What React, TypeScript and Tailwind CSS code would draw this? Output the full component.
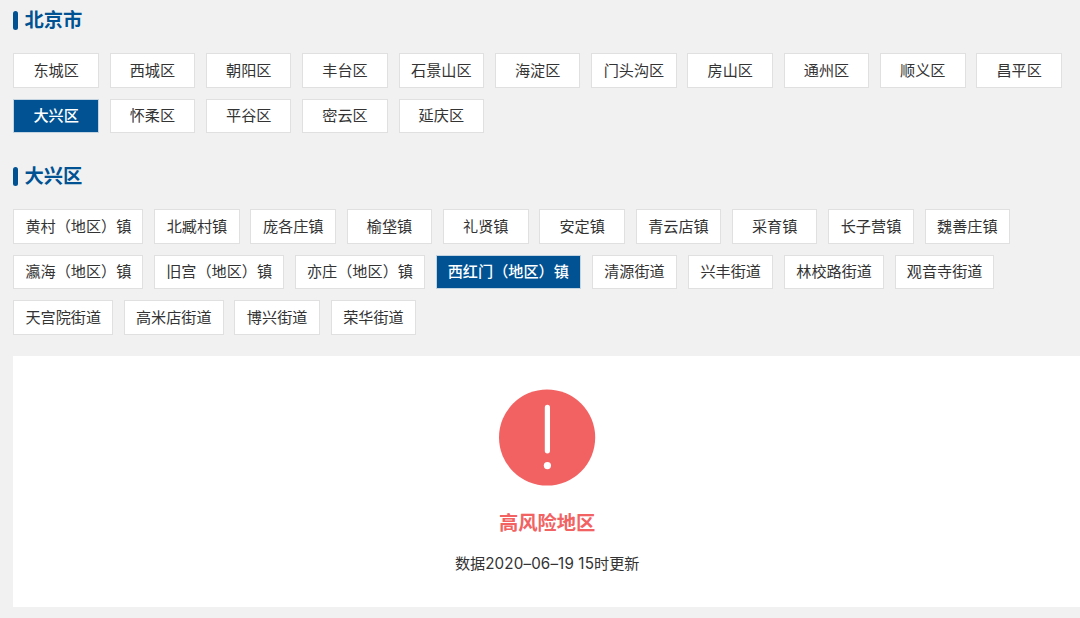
import { useState } from "react";
import clsx from "clsx";

const districts = [
  "东城区", "西城区", "朝阳区", "丰台区", "石景山区", "海淀区", "门头沟区", "房山区",
  "通州区", "顺义区", "昌平区", "大兴区", "怀柔区", "平谷区", "密云区", "延庆区",
];

const streets = [
  "黄村（地区）镇", "北臧村镇", "庞各庄镇", "榆垡镇", "礼贤镇", "安定镇", "青云店镇",
  "采育镇", "长子营镇", "魏善庄镇", "瀛海（地区）镇", "旧宫（地区）镇", "亦庄（地区）镇",
  "西红门（地区）镇", "清源街道", "兴丰街道", "林校路街道", "观音寺街道", "天宫院街道",
  "高米店街道", "博兴街道", "荣华街道",
];

function Title({ children }: { children: string }) {
  return (
    <h2 className="flex h-5 items-center gap-[6.5px] text-[19.3px] font-bold text-[#005293]">
      <span className="h-[19.5px] w-[4.5px] rounded-full bg-[#005293]" />
      <span className="pb-0.5">{children}</span>
    </h2>
  );
}

type AreaListProps = {
  items: string[];
  active: string;
  onSelect: (item: string) => void;
};

function AreaList({ items, active, onSelect }: AreaListProps) {
  return (
    <div className="flex flex-wrap gap-x-[10.8px] gap-y-[11px]">
      {items.map((item) => (
        <button
          key={item}
          onClick={() => onSelect(item)}
          className={clsx(
            "h-[34.5px] min-w-[85.5px] border px-[11px] pb-0.5 text-center text-[15.15px] leading-none whitespace-nowrap",
            item === active
              ? "border-[#c3d3e0] bg-[#005293] font-medium text-white"
              : "border-[#e0e0e0] bg-white text-[#333]"
          )}
        >
          {item}
        </button>
      ))}
    </div>
  );
}

function WarningIcon() {
  return (
    <svg width="97" height="97" viewBox="0 0 97 97" fill="none">
      <circle cx="48.1" cy="48.5" r="48.1" fill="#f26262" />
      <path d="M48.4 18.4v43.4" stroke="#fff" strokeWidth="5.2" strokeLinecap="round" />
      <circle cx="48.4" cy="76.6" r="3.6" fill="#fff" />
    </svg>
  );
}

export default function App() {
  const [district, setDistrict] = useState("大兴区");
  const [street, setStreet] = useState("西红门（地区）镇");

  return (
    <div className="h-[618px] overflow-hidden bg-[#f1f1f1] pt-[10.5px] pl-[13.4px] font-['Noto_Sans_CJK_SC',sans-serif]">
      <section>
        <Title>北京市</Title>
        <div className="mt-[22.8px]">
          <AreaList items={districts} active={district} onSelect={setDistrict} />
        </div>
      </section>
      <section className="mt-[33.2px]">
        <Title>{district}</Title>
        <div className="mt-[22.8px]">
          <AreaList items={streets} active={street} onSelect={setStreet} />
        </div>
      </section>
      <div className="mt-[21.2px] -mr-px flex h-[251.5px] flex-col items-center bg-white pt-[33px]">
        <WarningIcon />
        <p className="mt-[21px] text-[19.3px] leading-[30px] font-bold text-[#f26262]">高风险地区</p>
        <p className="mt-[13px] text-[15.15px] leading-6 text-[#333]">
          数据<span className="font-[Inter] text-[15.2px] tracking-[0.13px]">2020–06–19 15</span>时更新
        </p>
      </div>
    </div>
  );
}
